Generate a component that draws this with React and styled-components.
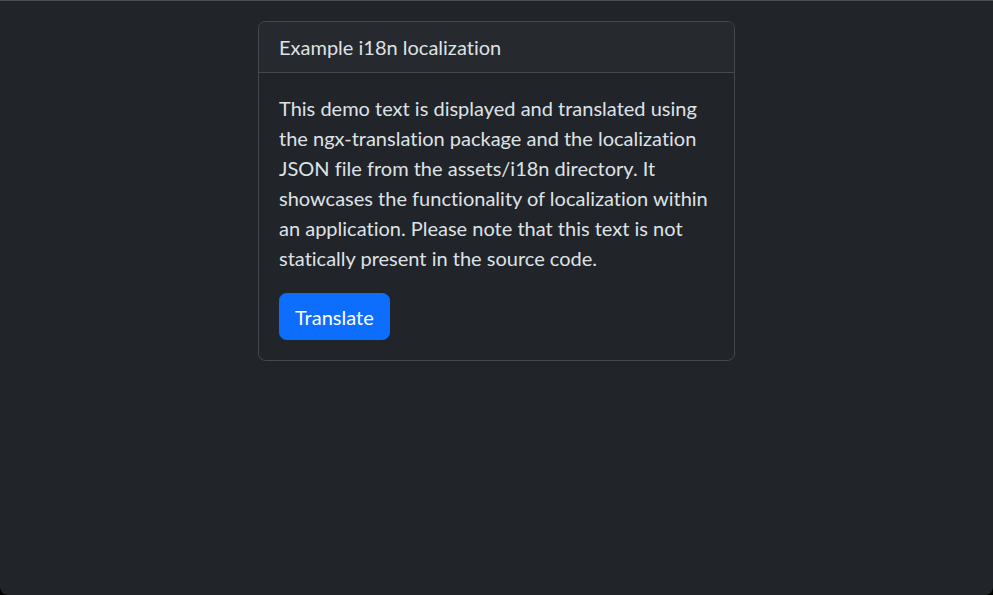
import styled, { createGlobalStyle } from 'styled-components';

const GlobalStyle = createGlobalStyle`
  html, body {
    margin: 0;
    padding: 0;
    background: #000;
  }
  body {
    font-family: Lato, "Noto Sans", sans-serif;
    font-variant-ligatures: none;
  }
`;

function App() {
  return (
    <Page>
      <GlobalStyle />
      <Card>
        <CardHeader>Example i18n localization</CardHeader>
        <CardBody>
          <Text>
            This demo text is displayed and translated using the ngx-translation package and the
            localization JSON file from the assets/i18n directory. It showcases the functionality
            of localization within an application. Please note that this text is not statically
            present in the source code.
          </Text>
          <PrimaryButton>Translate</PrimaryButton>
        </CardBody>
      </Card>
    </Page>
  );
}

export default App;

const Page = styled.div`
  box-sizing: border-box;
  height: 595px;
  background: #212529;
  border-top: 1px solid #4b4d50;
  border-radius: 0 0 8px 8px;
  padding-top: 20px;
  display: flex;
  flex-direction: column;
  align-items: center;
  color: #dee2e6;
  font-size: 20px;
  line-height: 30px;
`;

const Card = styled.div`
  width: 477px;
  box-sizing: border-box;
  border: 1px solid #45484c;
  border-radius: 7.5px;
  overflow: hidden;
`;

const CardHeader = styled.div`
  padding: 10px 20px;
  background: #26292d;
  border-bottom: 1px solid #45484c;
`;

const CardBody = styled.div`
  padding: 20px;
`;

const Text = styled.p`
  margin: 0 0 20px;
`;

const PrimaryButton = styled.button`
  font: inherit;
  font-variant-ligatures: none;
  color: #fff;
  background: #0d6efd;
  border: 1px solid #0d6efd;
  border-radius: 7.5px;
  padding: 7.5px 15px;
  cursor: pointer;
`;
